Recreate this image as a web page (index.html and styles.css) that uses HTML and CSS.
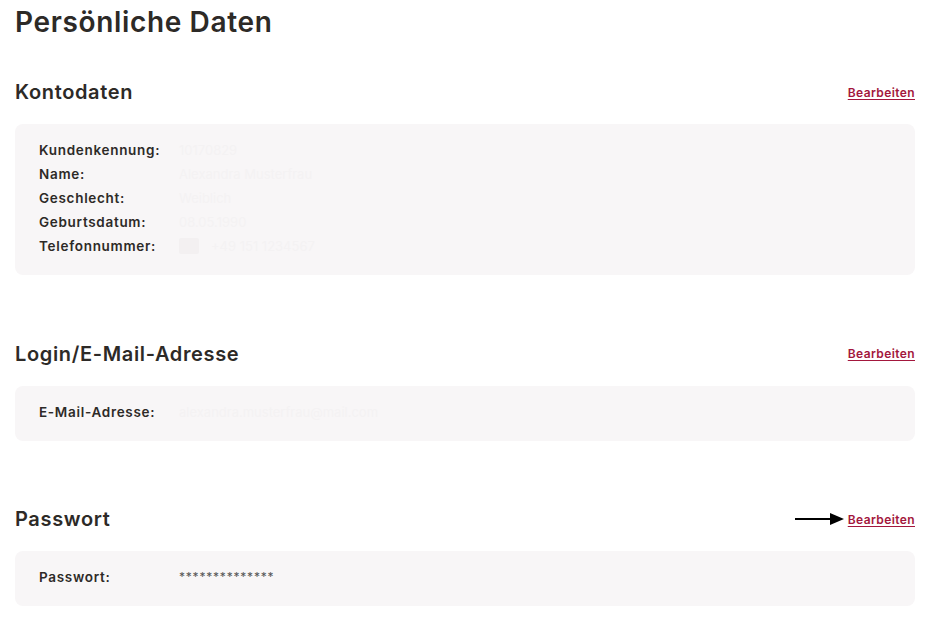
FILE: index.html
```html
<!DOCTYPE html>
<html lang="de">
<head>
<meta charset="utf-8">
<title>Persönliche Daten</title>
<link rel="stylesheet" href="styles.css">
</head>
<body>
<main class="page">
  <h1 class="page-title">Persönliche Daten</h1>

  <section class="section section-first">
    <div class="section-head">
      <h2 class="section-title">Kontodaten</h2>
      <a class="edit-link" href="#">Bearbeiten</a>
    </div>
    <div class="card">
      <div class="row"><span class="label">Kundenkennung:</span><span class="value faint">10170829</span></div>
      <div class="row"><span class="label">Name:</span><span class="value faint">Alexandra Musterfrau</span></div>
      <div class="row"><span class="label">Geschlecht:</span><span class="value faint">Weiblich</span></div>
      <div class="row"><span class="label">Geburtsdatum:</span><span class="value faint">08.05.1990</span></div>
      <div class="row"><span class="label">Telefonnummer:</span><span class="value faint"><span class="flag"></span>+49 151 1234567</span></div>
    </div>
  </section>

  <section class="section">
    <div class="section-head">
      <h2 class="section-title">Login/E-Mail-Adresse</h2>
      <a class="edit-link" href="#">Bearbeiten</a>
    </div>
    <div class="card">
      <div class="row"><span class="label">E-Mail-Adresse:</span><span class="value faint">alexandra.musterfrau@mail.com</span></div>
    </div>
  </section>

  <section class="section">
    <div class="section-head">
      <h2 class="section-title">Passwort</h2>
      <div class="edit-wrap">
        <svg class="arrow" width="50" height="14" viewBox="0 0 50 14" aria-hidden="true">
          <line x1="0" y1="7" x2="38" y2="7" stroke="#000" stroke-width="2"/>
          <polygon points="35,1 49,7 35,13" fill="#000"/>
        </svg>
        <a class="edit-link" href="#">Bearbeiten</a>
      </div>
    </div>
    <div class="card">
      <div class="row"><span class="label">Passwort:</span><span class="value stars">**************</span></div>
    </div>
  </section>
</main>
</body>
</html>
```

FILE: styles.css
```css
html, body {
  margin: 0;
  padding: 0;
  background: #ffffff;
}

body {
  font-family: Inter, "Open Sans", "Liberation Sans", sans-serif;
  color: #2d2a27;
}

.page {
  padding: 2px 17px 0 15px;
}

.page-title {
  margin: 0;
  font-size: 28px;
  line-height: 40px;
  font-weight: 600;
  letter-spacing: 0.65px;
}

.section {
  margin-top: 64.5px;
}

.section-first {
  margin-top: 36px;
}

.section-head {
  display: flex;
  justify-content: space-between;
  align-items: center;
  height: 28px;
  margin-bottom: 18px;
}

.section-title {
  margin: 0;
  font-size: 20px;
  line-height: 28px;
  font-weight: 600;
  letter-spacing: 0.65px;
}

.edit-wrap {
  display: flex;
  align-items: center;
  gap: 3px;
}

.arrow {
  display: block;
}

.edit-link {
  font-size: 12px;
  font-weight: 600;
  color: #a3173d;
  text-decoration: underline;
  text-underline-offset: 2px;
  letter-spacing: 0.4px;
}

.card {
  background: #f8f6f7;
  border-radius: 8px;
  padding: 14px 24px 17px;
}

.row {
  display: flex;
  height: 24px;
  align-items: center;
  font-size: 13px;
}

.label {
  width: 140px;
  flex: none;
  font-size: 13.5px;
  font-weight: 600;
  letter-spacing: 0.7px;
}

.value {
  font-size: 13px;
}

.faint {
  color: #f4f2f3;
  display: flex;
  align-items: center;
  gap: 12px;
}

.flag {
  display: inline-block;
  width: 20px;
  height: 16px;
  background: #f3f0f1;
  border-radius: 2px;
}

.stars {
  color: #555;
  font-size: 12px;
  letter-spacing: 0.8px;
  position: relative;
  top: -1px;
}
```
